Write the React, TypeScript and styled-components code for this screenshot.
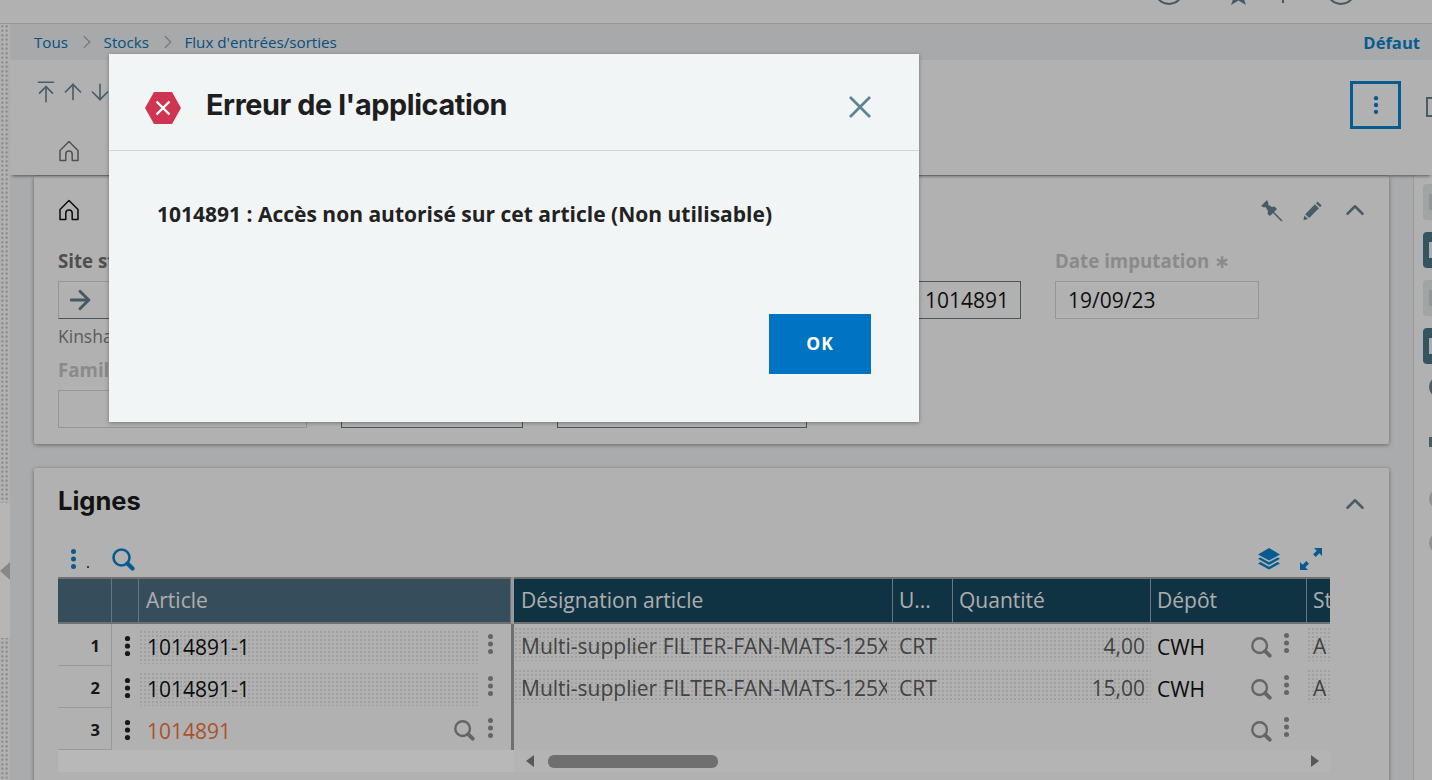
import React from 'react';
import styled, {createGlobalStyle} from 'styled-components';
import {ArrowUp, ArrowDown, ArrowUpToLine, ArrowRight, ChevronRight, ChevronUp} from 'lucide-react';

const GlobalStyle = createGlobalStyle`
  html, body { margin: 0; padding: 0; height: 100%; overflow: hidden; }
  body { font-family: "Open Sans", "Noto Sans", sans-serif; color: #111; background: #f6f6f6; }
  * { box-sizing: border-box; }
`;

const Page = styled.div`
  position: relative;
  display: flex;
  flex-direction: column;
  width: 1432px;
  height: 780px;
  overflow: hidden;
`;

/* ---------- top bar ---------- */
const TopBar = styled.div`
  flex: none;
  display: flex;
  justify-content: flex-end;
  align-items: flex-start;
  height: 24px;
  padding-right: 76px;
  background: #f6f6f6;
  border-bottom: 1px solid #d0d0d0;
  overflow: hidden;
  color: #5c7f92;
`;

const TopIcon = styled.svg<{$left: number}>`
  flex: none;
  margin-top: -25px;
  margin-left: ${(p) => p.$left}px;
`;

const Body = styled.div`
  flex: 1;
  min-height: 0;
  display: flex;
`;

const Grip = styled.div`
  position: relative;
  flex: none;
  width: 10px;
  background-color: #f6f6f6;
  background-image: radial-gradient(circle, #c0c0c0 1.1px, transparent 1.3px);
  background-size: 4.5px 4.5px;
`;

const GripHandle = styled.div`
  position: absolute;
  top: 479px;
  left: 0;
  width: 10px;
  height: 135px;
  background: #fffdfa;
  display: flex;
  align-items: center;
`;

const GripArrow = styled.span`
  width: 0;
  height: 0;
  border-top: 9px solid transparent;
  border-bottom: 9px solid transparent;
  border-right: 10px solid #bcbcbc;
`;

const Main = styled.div`
  flex: 1;
  min-width: 0;
  display: flex;
  flex-direction: column;
`;

/* ---------- breadcrumb ---------- */
const Breadcrumb = styled.div`
  flex: none;
  display: flex;
  align-items: center;
  height: 36px;
  padding: 0 12px 0 24px;
  background: #e9ebec;
  font-size: 15.2px;
`;

const Crumb = styled.span`
  color: #0a6fb0;
`;

const CrumbSep = styled.span`
  display: flex;
  margin: 0 5.5px 0 8px;
  color: #a8a8a8;
`;

const Defaut = styled.span`
  margin-left: auto;
  font-size: 16.6px;
  font-weight: 700;
  color: #0a7fc9;
`;

/* ---------- toolbar ---------- */
const Toolbar = styled.div`
  position: relative;
  z-index: 2;
  flex: none;
  height: 115px;
  background: #f6f6f6;
  box-shadow: 0 3px 3px -2px rgba(0, 0, 0, 0.5);
`;

const ToolRow = styled.div`
  display: flex;
  align-items: center;
  height: 70px;
  padding: 0 0 6px 23px;
  gap: 1px;
  color: #63808f;
  overflow: hidden;
`;

const KebabBox = styled.div`
  display: flex;
  align-items: center;
  justify-content: center;
  flex: none;
  width: 51px;
  height: 48px;
  margin-left: auto;
  margin-top: 26px;
  border: 3px solid #0a7fc9;
  color: #0a7fc9;
`;

const ClippedBox = styled.div`
  flex: none;
  width: 20px;
  height: 20px;
  margin-left: 24px;
  margin-right: -14px;
  margin-top: 30px;
  border: 2px solid #63808f;
`;

const Tabs = styled.div`
  display: flex;
  align-items: center;
  height: 45px;
  padding: 0 0 4px 48px;
  color: #707070;
`;

/* ---------- content ---------- */
const ContentRow = styled.div`
  flex: 1;
  min-height: 0;
  display: flex;
  background: #ebeeef;
`;

const Scroll = styled.div`
  flex: 1;
  min-width: 0;
  display: flex;
  flex-direction: column;
  gap: 24px;
  padding: 1px 24px 0;
`;

const Card = styled.section<{$padding?: string}>`
  flex: none;
  background: #f6f6f6;
  border-radius: 2px;
  box-shadow: 0 1px 4px rgba(0, 0, 0, 0.4);
  padding: ${(p) => p.$padding || '0'};
`;

const CardHead = styled.div`
  display: flex;
  align-items: center;
  height: 24px;
  color: #111;
`;

const CardActions = styled.div<{$top?: number}>`
  display: flex;
  align-items: center;
  margin-left: auto;
  margin-right: 19px;
  margin-top: ${(p) => p.$top || 0}px;
  gap: 16px;
  color: #63808f;
`;

const FieldRow = styled.div<{$top: number}>`
  display: flex;
  gap: 34px;
  margin-top: ${(p) => p.$top}px;
`;

const Field = styled.div<{$w: number}>`
  flex: none;
  width: ${(p) => p.$w}px;
`;

const Label = styled.div<{$dim?: boolean}>`
  height: 24px;
  line-height: 24px;
  margin-bottom: 8px;
  font-size: 18.7px;
  font-weight: 700;
  white-space: nowrap;
  color: ${(p) => (p.$dim ? '#c0c0c0' : '#6e6e6e')};
`;

const Star = styled.span`
  font-family: "DejaVu Sans", sans-serif;
  font-weight: 700;
  color: #c0c0c0;
`;

const Input = styled.div<{$dark?: boolean; $right?: boolean; $underline?: boolean}>`
  display: flex;
  align-items: center;
  justify-content: ${(p) => (p.$right ? 'flex-end' : 'flex-start')};
  height: 38px;
  padding: 0 11px 0 12px;
  font-size: 21px;
  color: #151515;
  border: 1px solid ${(p) => (p.$dark ? '#66797f' : '#cfcfcf')};
  border-bottom-color: ${(p) => (p.$dark || p.$underline ? '#66797f' : '#cfcfcf')};
  background: transparent;
  white-space: nowrap;
  overflow: hidden;
`;

const SubText = styled.div`
  height: 22px;
  margin-top: 6px;
  line-height: 22px;
  font-size: 17.5px;
  color: #7f7f7f;
`;

const ArrowBox = styled.span`
  display: flex;
  margin-left: -6px;
  color: #5f7c8b;
`;

const SectionTitle = styled.h2`
  margin: 0;
  font-family: "Inter", "Liberation Sans", sans-serif;
  font-size: 25.5px;
  font-weight: 700;
  line-height: 32px;
  color: #1a1a1a;
`;

const TableTools = styled.div`
  display: flex;
  align-items: center;
  height: 32px;
  margin-top: 30px;
  padding-left: 10px;
  color: #0a7fc9;
`;

const ToolsRight = styled.div`
  display: flex;
  align-items: center;
  gap: 18px;
  margin-left: auto;
  margin-right: 66px;
`;

const SmallDot = styled.span`
  width: 2px;
  height: 2px;
  margin: 16px 0 0 8px;
  background: #555;
  flex: none;
`;

const TableWrap = styled.div`
  display: flex;
  width: 1272px;
  margin-top: 2px;
`;

const Frozen = styled.div`
  flex: none;
  width: 453px;
  display: grid;
  grid-template-columns: 54px 27px 1fr;
  grid-auto-rows: 42px;
  grid-template-rows: 47px;
`;

const Divider = styled.div`
  flex: none;
  width: 3px;
  background: linear-gradient(#d4d4d4 47px, #9a9a9a 47px);
`;

const Scrolled = styled.div`
  flex: 1;
  min-width: 0;
  overflow: hidden;
  display: grid;
  grid-template-columns: 379px 60px 198px 156px 60px;
  grid-auto-rows: 42px;
  grid-template-rows: 47px;
`;

const HeadCell = styled.div<{$frozen?: boolean; $first?: boolean}>`
  display: flex;
  align-items: center;
  padding: 0 6px 2px ${(p) => (p.$first || p.$frozen ? 7 : 6)}px;
  font-size: 21px;
  color: #f0f0f0;
  background: ${(p) => (p.$frozen ? '#4b6c7e' : '#15475e')};
  border-top: 2px solid #9c9c9c;
  border-bottom: 2px solid #9c9c9c;
  border-right: 1px solid #8ea5b2;
  white-space: nowrap;
  overflow: hidden;
`;

const NumCell = styled.div`
  display: flex;
  align-items: center;
  justify-content: flex-end;
  padding: 2px 11px 0 0;
  font-size: 16.5px;
  font-weight: 700;
  color: #222;
  border-bottom: 1px solid #d4d4d4;
  border-right: 1px solid #d4d4d4;
`;

const MenuCell = styled.div`
  display: flex;
  align-items: center;
  justify-content: center;
  padding: 1px 0 0 4px;
  color: #222;
`;

const dots = `
  background-image: radial-gradient(circle, #dedede 0.8px, transparent 1px);
  background-size: 4px 4px;
`;

const ArticleCell = styled.div`
  display: flex;
  align-items: center;
  color: #8c8c8c;
  padding-right: 15px;
`;

const ArticleValue = styled.div<{$dotted?: boolean; $red?: boolean}>`
  flex: 1;
  align-self: flex-start;
  min-width: 0;
  height: 34px;
  margin-top: 6px;
  padding-left: 8px;
  font-size: 21px;
  line-height: 34px;
  color: ${(p) => (p.$red ? '#f0703a' : '#111')};
  ${(p) => (p.$dotted ? dots : '')}
`;

const IconSlot = styled.span<{$gap?: number; $top?: number}>`
  display: flex;
  flex: none;
  margin-left: ${(p) => p.$gap || 0}px;
  margin-top: ${(p) => p.$top ?? -3}px;
`;

const DataCell = styled.div<{$dotted?: boolean; $first?: boolean}>`
  height: 34px;
  margin-top: 3px;
  padding: 0 6px 0 ${(p) => (p.$first ? 7 : 6)}px;
  ${(p) => (p.$dotted ? dots : '')}
`;

const DataText = styled.div<{$right?: boolean}>`
  overflow: hidden;
  white-space: nowrap;
  font-size: 21px;
  line-height: 38px;
  height: 38px;
  color: #5c5c5c;
  text-align: ${(p) => (p.$right ? 'right' : 'left')};
`;

const DepotCell = styled.div`
  display: flex;
  align-items: center;
  padding: 0 15px 0 6px;
  color: #8c8c8c;
`;

const DepotValue = styled.span`
  flex: 1;
  font-size: 21px;
  color: #111;
  padding-top: 4px;
`;

const ScrollBar = styled.div`
  display: flex;
  width: 1272px;
  height: 22px;
`;

const ScrollBlank = styled.div`
  flex: none;
  width: 456px;
  background: #fff;
`;

const ScrollTrack = styled.div`
  flex: 1;
  display: flex;
  align-items: flex-start;
  padding: 5px 11px 0 12px;
  background: #fafafa;
`;

const ScrollArrow = styled.span<{$dir: 'left' | 'right'}>`
  flex: none;
  width: 0;
  height: 0;
  border-top: 6px solid transparent;
  border-bottom: 6px solid transparent;
  ${(p) => (p.$dir === 'left' ? 'border-right: 8px solid #7a7a7a;' : 'border-left: 8px solid #7a7a7a; margin-left: auto;')}
`;

const ScrollThumb = styled.div`
  width: 170px;
  height: 13px;
  margin-left: 14px;
  border-radius: 6px;
  background: #9a9a9a;
`;

/* ---------- right rail ---------- */
const Rail = styled.aside`
  flex: none;
  width: 19px;
  padding: 9px 0 0 9px;
  display: flex;
  flex-direction: column;
  gap: 12px;
  background: #f6f6f6;
  border-left: 1px solid #d6d6d6;
  overflow: hidden;
`;

const RailButton = styled.div<{$dark?: boolean}>`
  flex: none;
  width: 36px;
  height: 36px;
  border-radius: 4px;
  padding: 10px 0 0 6px;
  background: ${(p) => (p.$dark ? '#4b7385' : '#dfe3e5')};
  color: ${(p) => (p.$dark ? '#f0f0f0' : '#c8ced2')};
`;

const RailGlyph = styled.div`
  width: 4px;
  height: 16px;
  background: currentColor;
`;

const RailDot = styled.div<{$top: number; $color: string; $square?: boolean}>`
  flex: none;
  width: 22px;
  height: ${(p) => (p.$square ? 10 : 22)}px;
  margin: ${(p) => p.$top}px 0 0 6px;
  border-radius: ${(p) => (p.$square ? 0 : '50%')};
  background: ${(p) => p.$color};
`;

/* ---------- dialog ---------- */
const Overlay = styled.div`
  position: absolute;
  inset: 0;
  z-index: 10;
  background: rgba(0, 0, 0, 0.28);
`;

const Dialog = styled.div`
  position: absolute;
  left: 109px;
  top: 54px;
  width: 810px;
  height: 368px;
  display: flex;
  flex-direction: column;
  background: #f2f5f6;
  box-shadow: 0 1px 4px rgba(0, 0, 0, 0.35);
`;

const DialogHead = styled.div`
  flex: none;
  display: flex;
  align-items: center;
  height: 97px;
  padding: 8px 47px 0 36px;
  border-bottom: 1px solid #d0d5d8;
`;

const HexSlot = styled.span`
  display: flex;
  margin-top: 3px;
`;

const DialogTitle = styled.h1`
  margin: 0 0 3px 25px;
  font-family: "Inter", "Liberation Sans", sans-serif;
  font-size: 28.8px;
  font-weight: 700;
  letter-spacing: -0.4px;
  color: #1e1e1e;
`;

const CloseIcon = styled.span`
  display: flex;
  margin-left: auto;
  margin-top: 1px;
  color: #5f8496;
`;

const DialogBody = styled.div`
  flex: 1;
  padding: 49px 48px 0;
  font-size: 21px;
  font-weight: 700;
  color: #222;
  line-height: 28px;
`;

const DialogFoot = styled.div`
  flex: none;
  display: flex;
  justify-content: flex-end;
  padding: 0 48px 48px;
`;

const OkButton = styled.button`
  width: 102px;
  height: 60px;
  padding: 0 0 2px;
  border: 0;
  background: #0073c2;
  color: #fff;
  font-family: "Open Sans", sans-serif;
  font-size: 17.5px;
  font-weight: 700;
  letter-spacing: 1px;
`;

/* ---------- icons ---------- */
const Kebab = ({size = 22, r = 2.6}: {size?: number; r?: number}) => (
  <svg width={size / 2} height={size} viewBox="0 0 11 22" fill="currentColor">
    <circle cx="5.5" cy="3.5" r={r} />
    <circle cx="5.5" cy="11" r={r} />
    <circle cx="5.5" cy="18.5" r={r} />
  </svg>
);

const Home = ({size = 22}: {size?: number}) => (
  <svg width={size} height={size} viewBox="0 0 22 22" fill="none" stroke="currentColor" strokeWidth="1.5" strokeLinejoin="round">
    <path d="M2 10.500 11 1.500l9 9V20.500h-5.800v-6.200a3.200 3.200 0 0 0-6.400 0v6.200H2z" />
  </svg>
);

const Search = ({size = 24}: {size?: number}) => (
  <svg width={size} height={size} viewBox="0 0 24 24" fill="none" stroke="currentColor">
    <circle cx="10.5" cy="10.5" r="8" strokeWidth="2.6" />
    <path d="M16.5 16.5 21.5 21.5" strokeWidth="4.2" strokeLinecap="round" />
  </svg>
);

const Pin = () => (
  <svg width="26" height="23" viewBox="0 0 26 23" fill="currentColor">
    <path d="M7 1 1 7l3 1.500L5.500 8 8 12l-.5 3L10 17l7-7-2.500-2.500L12 8 8 5.500 8.500 4z" />
    <path d="M12 12 22 22" stroke="currentColor" strokeWidth="1.6" />
  </svg>
);

const Pencil = () => (
  <svg width="22" height="22" viewBox="0 0 22 22" fill="currentColor">
    <path d="M15.600 2.600 19.600 6.600 18 8.200 14 4.200zM12.900 5.300 16.900 9.300 7.200 19 3.200 15.200zM2.400 16.400 6 20l-4.600 1.200z" />
  </svg>
);

const Layers = () => (
  <svg width="24" height="24" viewBox="0 0 24 24" fill="currentColor">
    <path d="M12 1 23 7.400 12 13.600 1 7.400z" />
    <path d="M3.400 10.400 1 11.800 12 18l11-6.200-2.400-1.400-8.600 4.800z" />
    <path d="M3.400 15 1 16.400l11 6.200 11-6.200-2.400-1.400-8.600 4.800z" />
  </svg>
);

const Expand = () => (
  <svg width="24" height="24" viewBox="0 0 24 24" fill="currentColor">
    <path d="M15 1h8v8l-2.700-2.700-3.600 3.600-2.600-2.600 3.600-3.600z" />
    <path d="M9 23H1v-8l2.700 2.700 3.600-3.600 2.600 2.600-3.600 3.600z" />
  </svg>
);

const ErrorHex = () => (
  <svg width="36" height="32" viewBox="0 0 36 32">
    <polygon points="9,0 27,0 36,16 27,32 9,32 0,16" fill="#cf3450" />
    <path d="M11.500 9.500 24.500 22.500M24.500 9.500 11.500 22.500" stroke="#fff" strokeWidth="2.400" />
  </svg>
);

const CloseX = () => (
  <svg width="24" height="24" viewBox="0 0 24 24" fill="none" stroke="currentColor" strokeWidth="2.800">
    <path d="M2 2 22 22M22 2 2 22" />
  </svg>
);

const rows = [
  {n: 1, article: '1014891-1', name: 'Multi-supplier FILTER-FAN-MATS-125X125MM', qty: '4,00'},
  {n: 2, article: '1014891-1', name: 'Multi-supplier FILTER-FAN-MATS-125X125MM', qty: '15,00'},
  {n: 3, article: '1014891', name: '', qty: ''},
];

const App = () => {
  return (
    <Page>
      <GlobalStyle />
      <TopBar>
        <TopIcon $left={0} width="30" height="30" viewBox="0 0 30 30" fill="none" stroke="currentColor" strokeWidth="2">
          <circle cx="15" cy="15" r="14" />
        </TopIcon>
        <TopIcon $left={43} width="23" height="30" viewBox="0 0 23 30" fill="currentColor">
          <path d="M11.500 8l3 9 8.500.5-6.500 5.500 2.500 7-7.500-4.500-7.500 4.500 2.500-7L0 17.500l8.500-.5z" />
        </TopIcon>
        <TopIcon $left={32} width="3" height="30" viewBox="0 0 3 30" fill="currentColor">
          <rect x="0" y="24" width="2" height="4" />
        </TopIcon>
        <TopIcon $left={41} width="30" height="30" viewBox="0 0 30 30" fill="none" stroke="currentColor" strokeWidth="2">
          <circle cx="15" cy="15" r="14" />
        </TopIcon>
      </TopBar>

      <Body>
        <Grip>
          <GripHandle>
            <GripArrow />
          </GripHandle>
        </Grip>

        <Main>
          <Breadcrumb>
            <Crumb>Tous</Crumb>
            <CrumbSep><ChevronRight size={22} strokeWidth={1.4} /></CrumbSep>
            <Crumb>Stocks</Crumb>
            <CrumbSep><ChevronRight size={22} strokeWidth={1.4} /></CrumbSep>
            <Crumb>Flux d'entrées/sorties</Crumb>
            <Defaut>Défaut</Defaut>
          </Breadcrumb>

          <Toolbar>
            <ToolRow>
              <ArrowUpToLine size={26} strokeWidth={1.5} />
              <ArrowUp size={26} strokeWidth={1.5} />
              <ArrowDown size={26} strokeWidth={1.5} />
              <KebabBox><Kebab size={20} r={2.4} /></KebabBox>
              <ClippedBox />
            </ToolRow>
            <Tabs><Home size={22} /></Tabs>
          </Toolbar>

          <ContentRow>
            <Scroll>
              <Card $padding="22px 0 16px 24px">
                <CardHead>
                  <Home size={22} />
                  <CardActions>
                    <Pin />
                    <Pencil />
                    <ChevronUp size={30} strokeWidth={2} />
                  </CardActions>
                </CardHead>

                <FieldRow $top={27}>
                  <Field $w={249}>
                    <Label>Site stock</Label>
                    <Input $underline><ArrowBox><ArrowRight size={30} strokeWidth={2.4} /></ArrowBox></Input>
                    <SubText>Kinshasa</SubText>
                  </Field>
                  <Field $w={182}>
                    <Label>Type</Label>
                    <Input />
                  </Field>
                  <Field $w={464}>
                    <Label>Article</Label>
                    <Input $dark $right>1014891 - 1014891</Input>
                  </Field>
                  <Field $w={204}>
                    <Label $dim>Date imputation <Star>∗</Star></Label>
                    <Input>19/09/23</Input>
                  </Field>
                </FieldRow>

                <FieldRow $top={11}>
                  <Field $w={249}>
                    <Label $dim>Famille</Label>
                    <Input />
                  </Field>
                  <Field $w={182}>
                    <Label>&nbsp;</Label>
                    <Input $dark />
                  </Field>
                  <Field $w={250}>
                    <Label>&nbsp;</Label>
                    <Input $dark />
                  </Field>
                </FieldRow>
              </Card>

              <Card $padding="21px 0 40px 24px">
                <CardHead>
                  <SectionTitle>Lignes</SectionTitle>
                  <CardActions $top={6}><ChevronUp size={30} strokeWidth={2} /></CardActions>
                </CardHead>

                <TableTools>
                  <Kebab size={22} r={2.5} />
                  <SmallDot />
                  <IconSlot $gap={22} $top={0}><Search size={24} /></IconSlot>
                  <ToolsRight>
                    <Layers />
                    <Expand />
                  </ToolsRight>
                </TableTools>

                <TableWrap>
                  <Frozen>
                    <HeadCell $frozen />
                    <HeadCell $frozen />
                    <HeadCell $frozen>Article</HeadCell>
                    {rows.map((row) => (
                      <React.Fragment key={row.n}>
                        <NumCell>{row.n}</NumCell>
                        <MenuCell><Kebab size={22} r={2.6} /></MenuCell>
                        <ArticleCell>
                          <ArticleValue $dotted={row.n < 3} $red={row.n === 3}>{row.article}</ArticleValue>
                          {row.n === 3 ? <IconSlot $top={2}><Search size={22} /></IconSlot> : null}
                          <IconSlot $gap={row.n === 3 ? 10 : 5}><Kebab size={22} r={2.5} /></IconSlot>
                        </ArticleCell>
                      </React.Fragment>
                    ))}
                  </Frozen>

                  <Divider />

                  <Scrolled>
                    <HeadCell $first>Désignation article</HeadCell>
                    <HeadCell>U...</HeadCell>
                    <HeadCell>Quantité</HeadCell>
                    <HeadCell>Dépôt</HeadCell>
                    <HeadCell>Statut</HeadCell>
                    {rows.map((row) => (
                      <React.Fragment key={row.n}>
                        <DataCell $first $dotted={row.n < 3}><DataText>{row.name}</DataText></DataCell>
                        <DataCell $dotted={row.n < 3}><DataText>{row.n < 3 ? 'CRT' : ''}</DataText></DataCell>
                        <DataCell $dotted={row.n < 3}><DataText $right>{row.qty}</DataText></DataCell>
                        <DepotCell>
                          <DepotValue>{row.n < 3 ? 'CWH' : ''}</DepotValue>
                          <IconSlot $top={3}><Search size={22} /></IconSlot>
                          <IconSlot $gap={9} $top={-5}><Kebab size={22} r={2.5} /></IconSlot>
                        </DepotCell>
                        <DataCell $dotted={row.n < 3}><DataText>{row.n < 3 ? 'A' : ''}</DataText></DataCell>
                      </React.Fragment>
                    ))}
                  </Scrolled>
                </TableWrap>

                <ScrollBar>
                  <ScrollBlank />
                  <ScrollTrack>
                    <ScrollArrow $dir="left" />
                    <ScrollThumb />
                    <ScrollArrow $dir="right" />
                  </ScrollTrack>
                </ScrollBar>
              </Card>
            </Scroll>

            <Rail>
              <RailButton><RailGlyph /></RailButton>
              <RailButton $dark><RailGlyph /></RailButton>
              <RailButton><RailGlyph /></RailButton>
              <RailButton $dark><RailGlyph /></RailButton>
              <RailDot $top={0} $color="#63808f" />
              <RailDot $top={27} $color="#63808f" $square />
              <RailDot $top={29} $color="#c8c8c8" />
              <RailDot $top={10} $color="#c8c8c8" />
            </Rail>
          </ContentRow>
        </Main>
      </Body>

      <Overlay>
        <Dialog>
          <DialogHead>
            <HexSlot><ErrorHex /></HexSlot>
            <DialogTitle>Erreur de l'application</DialogTitle>
            <CloseIcon><CloseX /></CloseIcon>
          </DialogHead>
          <DialogBody>1014891 : Accès non autorisé sur cet article (Non utilisable)</DialogBody>
          <DialogFoot>
            <OkButton>OK</OkButton>
          </DialogFoot>
        </Dialog>
      </Overlay>
    </Page>
  );
};

export default App;
